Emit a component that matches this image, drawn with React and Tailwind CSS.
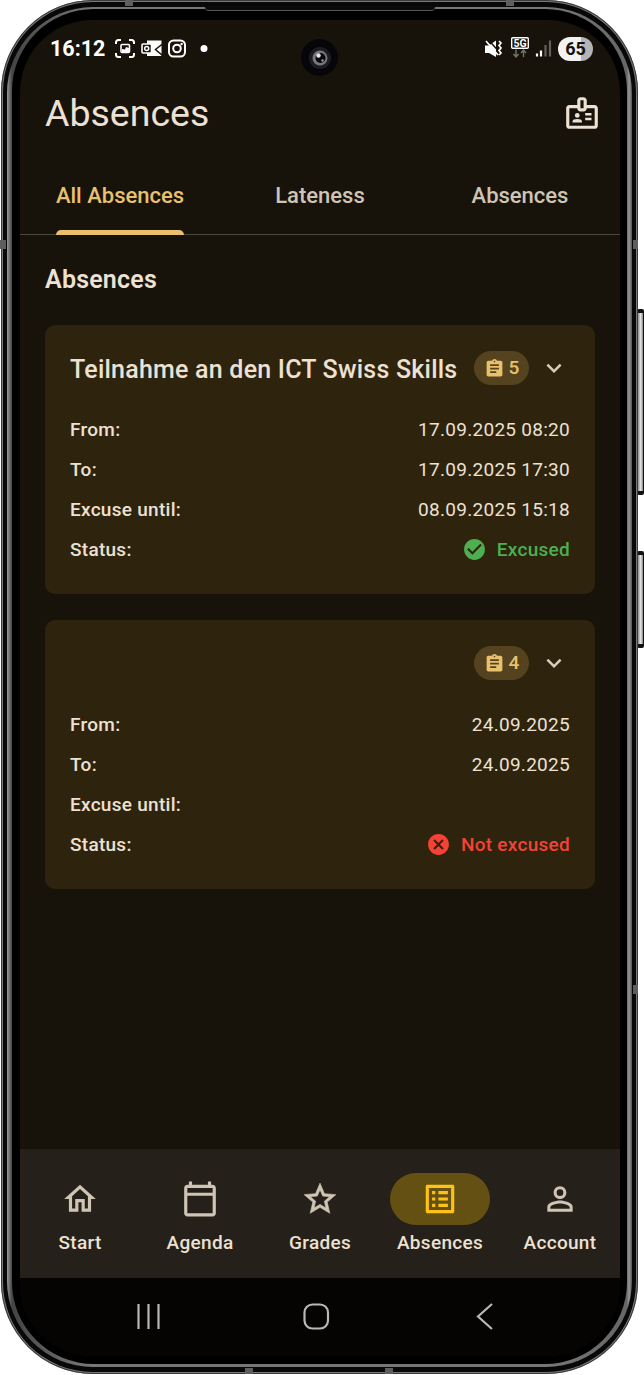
import { MdOutlineHome, MdOutlineCalendarToday, MdStarOutline, MdOutlineListAlt, MdPersonOutline, MdOutlineBadge, MdAssignment, MdCheckCircle, MdCancel, MdExpandMore } from "react-icons/md";

function Mark({ className }) {
  return <i className={"absolute bg-[#5d5e60] " + className} />;
}

function SideButton({ className }) {
  return (
    <i className={"absolute left-[637px] w-[7px] rounded-[2px] border-y-4 border-r border-[#111] bg-[linear-gradient(90deg,#555,#aaa_30%,#e4e4e4_60%,#888)] " + className} />
  );
}

function StatusBar() {
  return (
    <div className="flex h-[58px] items-center justify-between pl-[30px] pr-[27px] text-white">
      <div className="flex items-center">
        <span className="w-[65px] text-[21.500px] font-bold leading-none">16:12</span>
        <svg width="96" height="22" viewBox="0 0 96 22" fill="none" stroke="white" strokeWidth="2">
          <path d="M1 6V4.500q0-2.500 2.500-2.500H6M14 2h2.500q2.500 0 2.500 2.500V6M19 15v1.500q0 2.500-2.500 2.500H14M6 19H3.500Q1 19 1 16.500V15" />
          <rect x="6" y="6.500" width="8.500" height="8" rx="1" strokeWidth="1.600" />
          <path d="M7 14v-3l3 .5 1-2.500 3 1v4z" fill="white" stroke="none" />
          <path d="M32 2.500h14.500v15.500H32z" fill="white" stroke="none" />
          <path d="M47.500 6l-7 5.500 7 6" stroke="#17120a" strokeWidth="1.500" />
          <rect x="27" y="6" width="9.500" height="9" rx="1" fill="#17120a" stroke="white" strokeWidth="1.600" />
          <circle cx="31.700" cy="10.500" r="2" strokeWidth="1.500" />
          <rect x="54" y="2.500" width="16" height="16" rx="4.500" />
          <circle cx="62" cy="10.500" r="3.800" />
          <circle cx="66.600" cy="6" r="1.200" fill="white" stroke="none" />
          <circle cx="89" cy="10.500" r="3.500" fill="white" stroke="none" />
        </svg>
      </div>
      <div className="flex items-center">
        <svg width="75" height="28" viewBox="0 0 75 28" fill="none">
          <path d="M2 10.500h4L13 5.500v16.500l-7-4H2z" fill="white" />
          <path d="M5 4.500l10 11" stroke="#17120a" strokeWidth="1.500" />
          <path d="M3 6l12 14M16 6l2 2-2 2.500 2 2.500-2 2.500 2 2.500-2 2" stroke="white" strokeWidth="1.700" />
          <rect x="28.700" y="2.700" width="16.600" height="10.600" rx="1" stroke="white" strokeWidth="1.400" />
          <text x="37" y="12" textAnchor="middle" fill="white" fontSize="10.500" fontWeight="700" fontFamily="Roboto, sans-serif">5G</text>
          <path d="M33 14.500v7M30.500 19l2.500 3 2.500-3M40.500 22v-7M38 18l2.500-3 2.500 3" stroke="#77746e" strokeWidth="1.400" />
          <path d="M54 18.500v3M58 15.500v6" stroke="white" strokeWidth="2.200" />
          <path d="M62.500 10v11.500M67 5.500v16" stroke="#64615c" strokeWidth="2.200" />
        </svg>
        <div className="flex h-6 w-[35px] items-center justify-center rounded-full bg-[linear-gradient(90deg,#f2f2f2_64%,#b4b4b4_67%)] text-[18px] font-bold leading-none text-[#14110c]">65</div>
      </div>
    </div>
  );
}

function Row({ label, children }) {
  return (
    <div className="flex h-[40.100px] items-center justify-between">
      <span className="font-medium">{label}</span>
      <span>{children}</span>
    </div>
  );
}

function Card({ title, count, from, to, until, excused }) {
  return (
    <section className="h-[269px] rounded-[10px] bg-[#2e230d] px-[25px] pt-[26px] text-[19px] tracking-[0.280px] text-[#ece1d2]">
      <div className="mb-[25px] flex h-[34px] items-center">
        <h3 className="flex-1 whitespace-nowrap pt-[4px] text-[25px] font-medium tracking-[0.220px]">{title}</h3>
        <span className="flex h-[34px] w-[55px] items-center justify-center gap-[4px] rounded-full bg-[#54431e] text-[19px] font-medium tracking-normal text-[#e9c16c]">
          <MdAssignment size={21} />
          {count}
        </span>
        <MdExpandMore size={30} className="ml-[10px] mr-px text-[#d8cdbd]" />
      </div>
      <Row label="From:">{from}</Row>
      <Row label="To:">{to}</Row>
      <Row label="Excuse until:">{until}</Row>
      <Row label="Status:">
        {excused ? (
          <span className="flex items-center gap-[10px] font-medium text-[#4caf50]"><MdCheckCircle size={25} className="-mt-[2px]" />Excused</span>
        ) : (
          <span className="flex items-center gap-[10px] font-medium text-[#f44336]"><MdCancel size={25} className="-mt-[2px]" />Not excused</span>
        )}
      </Row>
    </section>
  );
}

const items = [
  ["Start", MdOutlineHome],
  ["Agenda", MdOutlineCalendarToday],
  ["Grades", MdStarOutline],
  ["Absences", MdOutlineListAlt],
  ["Account", MdPersonOutline],
];

export default function App() {
  return (
    <div className="relative h-[1375px] w-[644px] overflow-hidden bg-white font-['Roboto',sans-serif]">
      <SideButton className="top-[309px] h-[186px]" />
      <SideButton className="top-[551px] h-[97px]" />
      <div className="relative ml-px h-[1374px] w-[637px] rounded-[92px] bg-[#77787a] px-[2px] py-[2px] ring-1 ring-inset ring-[#3a3a3c]">
        <div className="h-full rounded-[90px] bg-[#080809] px-[4px] py-[5px]">
          <div className="h-full rounded-[86px] bg-[linear-gradient(90deg,#999,#444_5px,#777_80px,#777_545px,#666_620px,#999_622px,#555)] px-[5px] pb-[3px] pt-[2px]">
            <div className="h-full rounded-[82px] bg-black pb-[8px] pl-[8px] pr-[7px] pt-[11px]">
              <main className="flex h-full w-[600px] flex-col overflow-hidden rounded-[72px] bg-[#17120a] text-[#ece1d2]">
                <StatusBar />
                <header className="flex h-[70px] items-center justify-between pl-[25px] pr-[19px]">
                  <h1 className="pt-[2px] text-[37.500px] leading-none">Absences</h1>
                  <MdOutlineBadge size={38} />
                </header>
                <nav className="mt-[5px] flex h-[82px] border-b border-[#4b463d] text-[22px] font-medium text-[#cfc5b4]">
                  <div className="flex flex-1 justify-center">
                    <span className="flex h-[82px] flex-col justify-between pt-[26px] text-[#e9c16c]">
                      All Absences
                      <i className="h-[5px] rounded-t-[5px] bg-[#e9c16c]" />
                    </span>
                  </div>
                  <div className="flex flex-1 justify-center pt-[26px]">Lateness</div>
                  <div className="flex flex-1 justify-center pt-[26px]">Absences</div>
                </nav>
                <div className="flex flex-1 flex-col gap-[26px] px-[25px]">
                  <h2 className="mb-[-26px] h-[90px] pt-[26px] text-[25px] font-semibold tracking-[0.200px]">Absences</h2>
                  <Card title="Teilnahme an den ICT Swiss Skills" count="5" from="17.09.2025 08:20" to="17.09.2025 17:30" until="08.09.2025 15:18" excused />
                  <Card title="" count="4" from="24.09.2025" to="24.09.2025" until="" />
                </div>
                <nav className="flex h-[129px] bg-[#26201a] pt-6">
                  {items.map(([label, Icon]) => (
                    <div key={label} className="flex flex-1 flex-col items-center gap-[5px] text-[19px] font-medium tracking-[0.300px]">
                      <span className={label === "Absences" ? "flex h-[52px] w-[100px] items-center justify-center rounded-full bg-[#645012] text-[#fec115]" : "flex h-[52px] w-[100px] items-center justify-center text-[#cfc5b4]"}>
                        <Icon size={38} className={label === "Grades" ? "[stroke-width:0.4] stroke-current" : ""} />
                      </span>
                      <span className="leading-[25px]">{label}</span>
                    </div>
                  ))}
                </nav>
                <div className="flex h-[78px] bg-[#050403] pt-[21px]">
                  <svg width="599" height="34" viewBox="0 0 599 34" fill="none" stroke="#b8b8b8" strokeWidth="2.200">
                    <path d="M118.500 5v25M128.500 5v25M138.500 5v25M472 5l-14 12.500 14 12.500" />
                    <rect x="284.500" y="5.500" width="23.500" height="24" rx="8" />
                  </svg>
                </div>
              </main>
            </div>
          </div>
        </div>
      </div>
      <i className="absolute left-[205px] top-[6px] h-[5px] w-[230px] rounded-b-[4px] border-b border-[#55565a] bg-[#0a0a0b]" />
      <Mark className="left-[125px] top-0 h-[6px] w-[8px]" />
      <Mark className="left-[506px] top-0 h-[6px] w-[8px]" />
      <Mark className="left-[245px] top-[1368px] h-[6px] w-[8px]" />
      <Mark className="left-[385px] top-[1368px] h-[6px] w-[8px]" />
      <Mark className="left-0 top-[240px] h-[9px] w-[6px]" />
      <Mark className="left-[633px] top-[240px] h-[9px] w-[5px]" />
      <Mark className="left-[633px] top-[985px] h-[9px] w-[5px]" />
      <div className="absolute left-[301px] top-[39px] flex h-[37px] w-[37px] items-center justify-center rounded-full bg-[#060608]">
        <svg width="24" height="24" viewBox="0 0 24 24">
          <circle cx="12" cy="12" r="11" fill="#1c1c22" />
          <circle cx="12" cy="12" r="7.500" fill="#77777c" />
          <circle cx="12.500" cy="12" r="5" fill="#08080a" />
          <circle cx="10.500" cy="9.500" r="2.200" fill="#e5e5e8" />
          <circle cx="14.500" cy="14.500" r="1.200" fill="#9a9aa0" />
        </svg>
      </div>
    </div>
  );
}
